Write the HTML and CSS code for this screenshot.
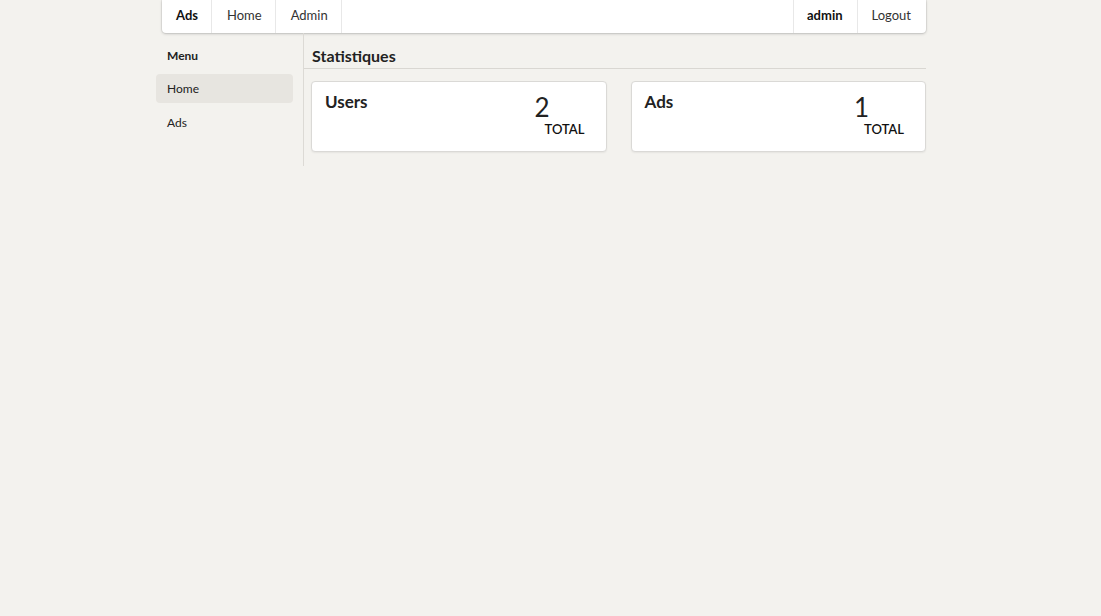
FILE: index.html
```html
<!DOCTYPE html>
<html>
<head>
<meta charset="utf-8">
<link rel="stylesheet" href="styles.css">
</head>
<body>
<div class="page">
  <nav class="topbar">
    <a class="nav-item brand">Ads</a>
    <a class="nav-item">Home</a>
    <a class="nav-item">Admin</a>
    <div class="spacer"></div>
    <a class="nav-item left-sep strong">admin</a>
    <a class="nav-item left-sep last">Logout</a>
  </nav>
  <div class="layout">
    <aside class="sidebar">
      <div class="side-header">Menu</div>
      <a class="side-item active">Home</a>
      <a class="side-item">Ads</a>
    </aside>
    <main class="main">
      <h2 class="title">Statistiques</h2>
      <div class="cards">
        <div class="card">
          <div class="card-title">Users</div>
          <div class="stat">
            <div class="stat-value">2</div>
            <div class="stat-label">TOTAL</div>
          </div>
        </div>
        <div class="card">
          <div class="card-title">Ads</div>
          <div class="stat">
            <div class="stat-value">1</div>
            <div class="stat-label">TOTAL</div>
          </div>
        </div>
      </div>
    </main>
  </div>
</div>
</body>
</html>
```

FILE: styles.css
```css
* { box-sizing: border-box; }
html, body {
  margin: 0;
  background: #f3f2ee;
  font-family: Lato, "Open Sans", sans-serif;
  color: #222;
}
.page {
  width: 770px;
  margin-left: 156px;
}
.topbar {
  display: flex;
  height: 33px;
  margin-left: 6px;
  background: #fff;
  border-radius: 0 0 4px 4px;
  box-shadow: 0 1px 3px rgba(0,0,0,0.18), 0 0 0 1px rgba(34,36,38,0.06);
}
.nav-item {
  display: flex;
  align-items: center;
  padding: 0 13px 3px 15px;
  font-size: 13px;
  color: #333;
  border-right: 1px solid #e8e8e8;
}
.brand { font-weight: 700; color: #111; padding: 0 13px 3px 14px; }
.nav-item.left-sep { border-right: none; border-left: 1px solid #e8e8e8; }
.strong { font-weight: 700; color: #111; padding: 0 14px 3px 13px; }
.spacer { flex: 1; }
.last { padding: 0 15px 3px 14px; }
.layout {
  display: flex;
  align-items: stretch;
}
.sidebar {
  width: 148px;
  padding: 0 10px 0 0;
  border-right: 1px solid #dcdad5;
  min-height: 133px;
}
.side-header {
  font-size: 12px;
  font-weight: 700;
  color: #222;
  padding: 15px 11px 0;
  height: 41px;
}
.side-item {
  display: block;
  font-size: 12px;
  color: #222;
  padding: 0 11px;
  height: 29px;
  line-height: 29px;
  border-radius: 4px;
  margin-bottom: 5px;
}
.side-item.active { background: #e7e5e0; }
.main {
  flex: 1;
}
.title {
  margin: 0;
  font-size: 16px;
  font-weight: 700;
  color: #222;
  padding: 13px 8px 0;
  height: 36px;
  border-bottom: 1px solid #d9d7d2;
}
.cards {
  display: grid;
  grid-template-columns: 1fr 1fr;
  gap: 24px;
  padding: 12px 0 0 7px;
}
.card {
  background: #fff;
  border: 1px solid #dad9d6;
  border-radius: 4px;
  height: 71px;
  display: flex;
  justify-content: space-between;
  padding: 9px 21px 0 13px;
  box-shadow: 0 1px 2px rgba(0,0,0,0.06);
}
.card-title {
  font-size: 17px;
  font-weight: 700;
  color: #222;
}
.stat {
  display: flex;
  flex-direction: column;
  align-items: flex-start;
  padding-top: 3px;
}
.stat-value {
  font-size: 26px;
  line-height: 26px;
  margin-left: -10px;
  color: #222;
}
.stat-label {
  font-size: 13px;
  font-weight: 600;
  color: #111;
  margin-top: 1px;
}
```
